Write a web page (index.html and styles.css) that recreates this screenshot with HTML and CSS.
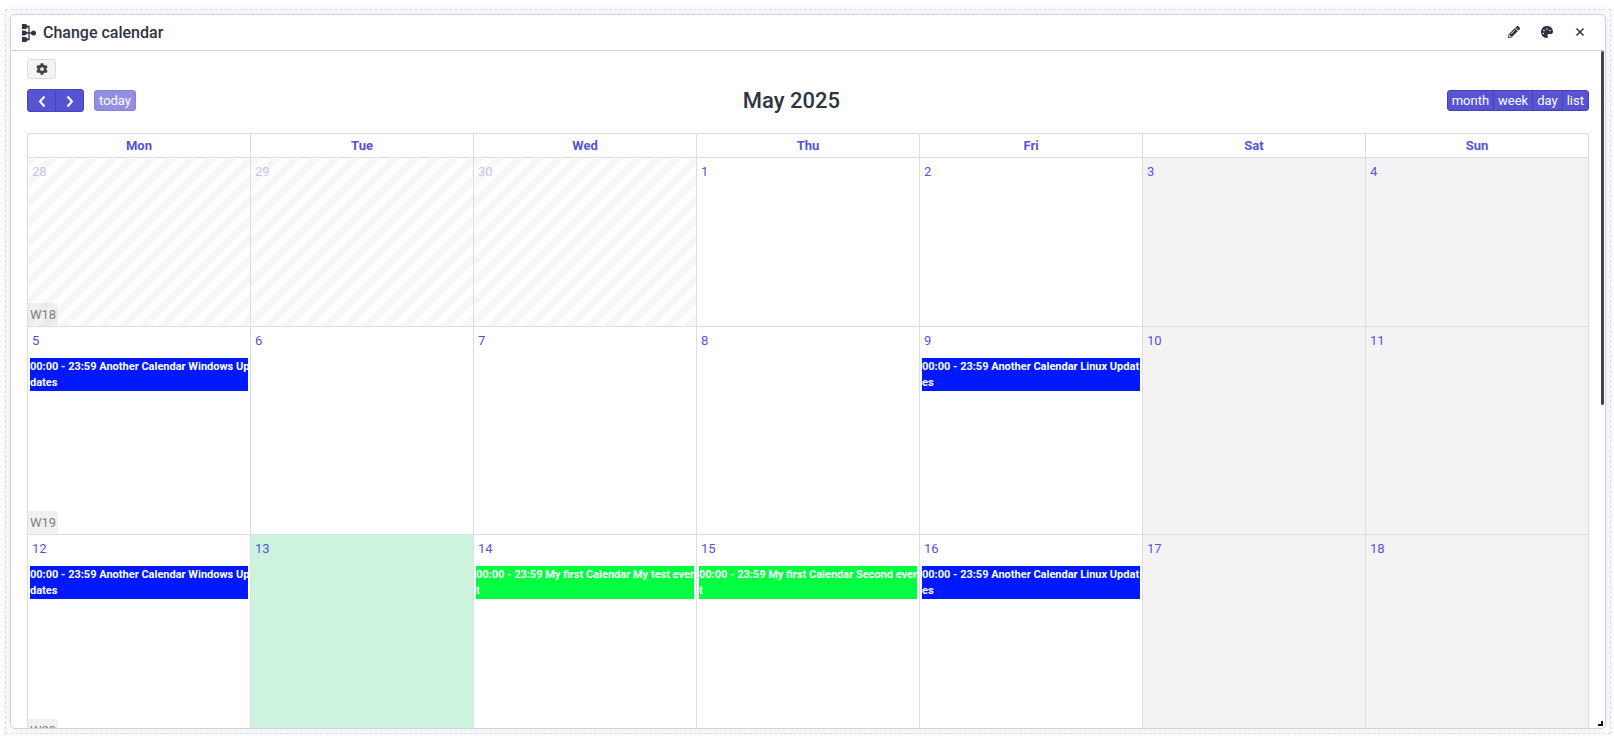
FILE: index.html
```html
<!DOCTYPE html>
<html lang="en">
<head>
<meta charset="utf-8">
<title>Change calendar</title>
<link rel="stylesheet" href="styles.css">
</head>
<body>
<div class="grid-cell">
<section class="widget">
  <header class="widget-header">
    <svg class="logo" viewBox="0 0 14 18" aria-hidden="true"><path d="M2.500 2.500H7V15.500H2.500M2.500 9H12" fill="none" stroke="currentColor" stroke-width="1.300"/><path d="M0 0h3a2.300 2.300 0 0 1 0 5H0zM0 6.500h2.500a2.300 2.300 0 0 1 0 5H0zM0 13h3a2.300 2.300 0 0 1 0 5H0z" fill="currentColor"/><circle cx="11.500" cy="9" r="2.500" fill="currentColor"/></svg>
    <h1 class="widget-title">Change calendar</h1>
    <div class="tools">
      <button class="tool" aria-label="Edit"><svg viewBox="0 0 512 512"><path fill="currentColor" fill-rule="evenodd" d="M498 142l-46 46c-5 5-12 5-17 0L324 77c-5-5-5-12 0-17l46-46c19-19 49-19 68 0l60 60c19 19 19 49 0 68zM284 99L22 362 0 484c-3 17 12 31 28 28l122-21 262-263c5-5 5-12 0-17L301 99c-5-4-12-4-17 0zM88 424h48v36l-64 12-32-32 11-64h37zM124 340c-5-6-5-14 0-20l154-154c6-5 14-5 20 0s5 14 0 20L144 340c-6 5-14 5-20 0z"/></svg></button>
      <button class="tool" aria-label="Color"><svg viewBox="0 0 512 512"><path fill="currentColor" fill-rule="evenodd" d="M204 5C105 24 25 104 5 203c-37 188 132 325 242 308 36-6 53-48 37-80-20-39 9-86 53-86h69c58 0 106-48 106-105C511 88 370-28 204 5zM96 288a32 32 0 1 1 0 64 32 32 0 0 1 0-64zm32-128a32 32 0 1 1 0 64 32 32 0 0 1 0-64zm128-64a32 32 0 1 1 0 64 32 32 0 0 1 0-64zm128 64a32 32 0 1 1 0 64 32 32 0 0 1 0-64z"/></svg></button>
      <button class="tool" aria-label="Close"><svg viewBox="0 0 12 12"><path d="M2.500 2.500l7 7M9.500 2.500l-7 7" stroke="currentColor" stroke-width="1.500" fill="none"/></svg></button>
    </div>
  </header>
  <div class="widget-body">
    <button class="settings" aria-label="Settings"><svg viewBox="0 0 512 512"><path fill="currentColor" fill-rule="evenodd" d="M487 316l-42-25c4-23 4-47 0-70l42-25c5-3 8-9 6-14-12-36-31-68-55-95-4-4-10-5-15-2l-43 24c-18-15-38-27-61-35V25c0-6-4-11-9-12-36-8-74-8-110 0-5 1-9 6-9 12v49c-22 8-43 20-61 35L88 85c-5-3-11-2-15 2-24 27-43 59-55 95-2 5 1 11 6 14l42 25c-4 23-4 47 0 70l-42 25c-5 3-8 9-6 14 12 36 31 68 55 95 4 4 10 5 15 2l42-24c18 15 39 27 61 35v49c0 6 4 11 9 12 36 8 74 8 110 0 5-1 9-6 9-12v-49c23-8 43-20 61-35l43 24c5 3 11 2 15-2 24-27 43-59 55-95 2-5-1-11-6-14zM256 336a80 80 0 1 1 0-160 80 80 0 0 1 0 160z"/></svg></button>
    <div class="toolbar">
      <div class="toolbar-side">
        <div class="button-group">
          <button class="btn nav" aria-label="Previous"><svg viewBox="0 0 12 14"><path d="M8.500 2.500L4 7.500l4.500 5" fill="none" stroke="currentColor" stroke-width="2"/></svg></button>
          <button class="btn nav" aria-label="Next"><svg viewBox="0 0 12 14"><path d="M3.500 2.500L8 7.500l-4.500 5" fill="none" stroke="currentColor" stroke-width="2"/></svg></button>
        </div>
        <button class="btn today-btn" disabled>today</button>
      </div>
      <h2 class="month-title">May 2025</h2>
      <div class="button-group">
        <button class="btn">month</button>
        <button class="btn">week</button>
        <button class="btn">day</button>
        <button class="btn">list</button>
      </div>
    </div>
    <table class="calendar">
      <thead><tr><th>Mon</th><th>Tue</th><th>Wed</th><th>Thu</th><th>Fri</th><th>Sat</th><th>Sun</th></tr></thead>
      <tbody>
        <tr class="short-week">
          <td class="other"><a href="#" class="date">28</a><a href="#" class="week-number">W18</a></td>
          <td class="other"><a href="#" class="date">29</a></td>
          <td class="other"><a href="#" class="date">30</a></td>
          <td><a href="#" class="date">1</a></td>
          <td><a href="#" class="date">2</a></td>
          <td class="weekend"><a href="#" class="date">3</a></td>
          <td class="weekend"><a href="#" class="date">4</a></td>
        </tr>
        <tr>
          <td><a href="#" class="date">5</a><a href="#" class="event another"><span class="event-title">00:00 - 23:59 Another Calendar Windows Updates</span></a><a href="#" class="week-number">W19</a></td>
          <td><a href="#" class="date">6</a></td>
          <td><a href="#" class="date">7</a></td>
          <td><a href="#" class="date">8</a></td>
          <td><a href="#" class="date">9</a><a href="#" class="event another"><span class="event-title">00:00 - 23:59 Another Calendar Linux Updates</span></a></td>
          <td class="weekend"><a href="#" class="date">10</a></td>
          <td class="weekend"><a href="#" class="date">11</a></td>
        </tr>
        <tr>
          <td><a href="#" class="date">12</a><a href="#" class="event another"><span class="event-title">00:00 - 23:59 Another Calendar Windows Updates</span></a><a href="#" class="week-number">W20</a></td>
          <td class="current"><a href="#" class="date">13</a></td>
          <td><a href="#" class="date">14</a><a href="#" class="event first"><span class="event-title">00:00 - 23:59 My first Calendar My test event</span></a></td>
          <td><a href="#" class="date">15</a><a href="#" class="event first"><span class="event-title">00:00 - 23:59 My first Calendar Second event</span></a></td>
          <td><a href="#" class="date">16</a><a href="#" class="event another"><span class="event-title">00:00 - 23:59 Another Calendar Linux Updates</span></a></td>
          <td class="weekend"><a href="#" class="date">17</a></td>
          <td class="weekend"><a href="#" class="date">18</a></td>
        </tr>
      </tbody>
    </table>
  </div>
  <span class="scroll-thumb"></span>
  <span class="resize-handle"></span>
</section>
</div>
</body>
</html>
```
FILE: styles.css
```css
* { box-sizing: border-box; }
body {
  margin: 0;
  height: 100vh;
  padding: 9px 3px 2px 5px;
  background: #fff;
  color: #2d3442;
  font: 13px/20px Roboto, sans-serif;
  overflow: hidden;
}
a { color: #5753d5; text-decoration: none; }
button { font: inherit; color: inherit; cursor: pointer; }
.grid-cell {
  height: 100%;
  padding: 4px;
  border: 1px dashed #dde1e8;
}
.widget {
  position: relative;
  height: 100%;
  display: flex;
  flex-direction: column;
  background: #fff;
  border: 1px solid #d0d3d4;
  border-radius: 5px;
  box-shadow: 0 0 14px rgba(60, 90, 200, 0.15);
  overflow: hidden;
}
.widget-header {
  flex: none;
  display: flex;
  align-items: center;
  height: 36px;
  padding: 0 16px 0 11px;
  border-bottom: 1px solid #d0d3d4;
}
.logo { width: 14px; height: 18px; }
.widget-title { margin: 0 0 0 7px; font-size: 16px; font-weight: 500; }
.tools { display: flex; gap: 15px; margin-left: auto; }
.tool { display: flex; width: 18px; height: 18px; padding: 2px 3px; border: 0; background: none; }
.tool svg { width: 12px; height: 12px; }
.widget-body {
  flex: 1;
  min-height: 0;
  padding: 8px 16px 0;
  overflow: hidden;
}
.settings {
  display: flex;
  justify-content: center;
  align-items: center;
  width: 29px;
  height: 20px;
  padding: 0;
  border: 1px solid #dadcde;
  border-radius: 3px;
  background: #f4f4f4;
  color: #444;
}
.settings svg { width: 12px; height: 12px; }
.toolbar {
  display: flex;
  align-items: center;
  justify-content: space-between;
  height: 23px;
  margin: 10px 0 21px;
}
.toolbar-side { display: flex; align-items: center; gap: 10px; }
.month-title { margin: 0; font-size: 22px; font-weight: 500; }
.button-group { display: flex; }
.btn {
  height: 21px;
  padding: 0 4px;
  border: 1px solid #4642b5;
  border-radius: 3px;
  background: #5753d5;
  color: #fff;
  line-height: 19px;
}
.button-group .btn:not(:first-child) { margin-left: -1px; border-top-left-radius: 0; border-bottom-left-radius: 0; }
.button-group .btn:not(:last-child) { border-top-right-radius: 0; border-bottom-right-radius: 0; }
.nav { display: flex; justify-content: center; align-items: center; width: 29px; height: 23px; }
.nav svg { width: 12px; height: 14px; }
.today-btn { opacity: 0.65; }
.calendar { width: 100%; table-layout: fixed; border-collapse: collapse; }
.calendar th {
  height: 24px;
  padding: 0;
  border: 1px solid #ddd;
  color: #5753d5;
  font-weight: 700;
}
.calendar td {
  position: relative;
  height: 208px;
  padding: 4px 2px 0;
  border: 1px solid #ddd;
  vertical-align: top;
}
.calendar .short-week td { height: 169px; }
.date { display: block; padding-left: 2px; }
.other .date { opacity: 0.3; }
.other {
  background: repeating-linear-gradient(135deg, #f6f6f6 0 7px, #fff 7px 14px);
}
.weekend { background: #f3f3f3; }
.current { background: #ccf3de; }
.event {
  display: block;
  height: 33px;
  margin-top: 7px;
  padding-top: 1px;
  color: #fff;
  font-size: 11px;
  font-weight: 700;
  line-height: 16px;
  word-break: break-all;
}
.event-title { display: block; margin-right: -3px; }
.another { background: #0019ff; }
.first { background: #00ff40; }
.week-number {
  position: absolute;
  left: 0;
  bottom: 0;
  padding: 2px 2px 1px;
  border-radius: 0 3px 0 0;
  background: rgba(208, 208, 208, 0.3);
  color: #808080;
}
.scroll-thumb {
  position: absolute;
  top: 36px;
  right: 1px;
  width: 3px;
  height: 354px;
  border-radius: 2px;
  background: #444;
}
.resize-handle {
  position: absolute;
  right: 2px;
  bottom: 2px;
  width: 5px;
  height: 5px;
  border: solid #111;
  border-width: 0 2px 2px 0;
}
```
